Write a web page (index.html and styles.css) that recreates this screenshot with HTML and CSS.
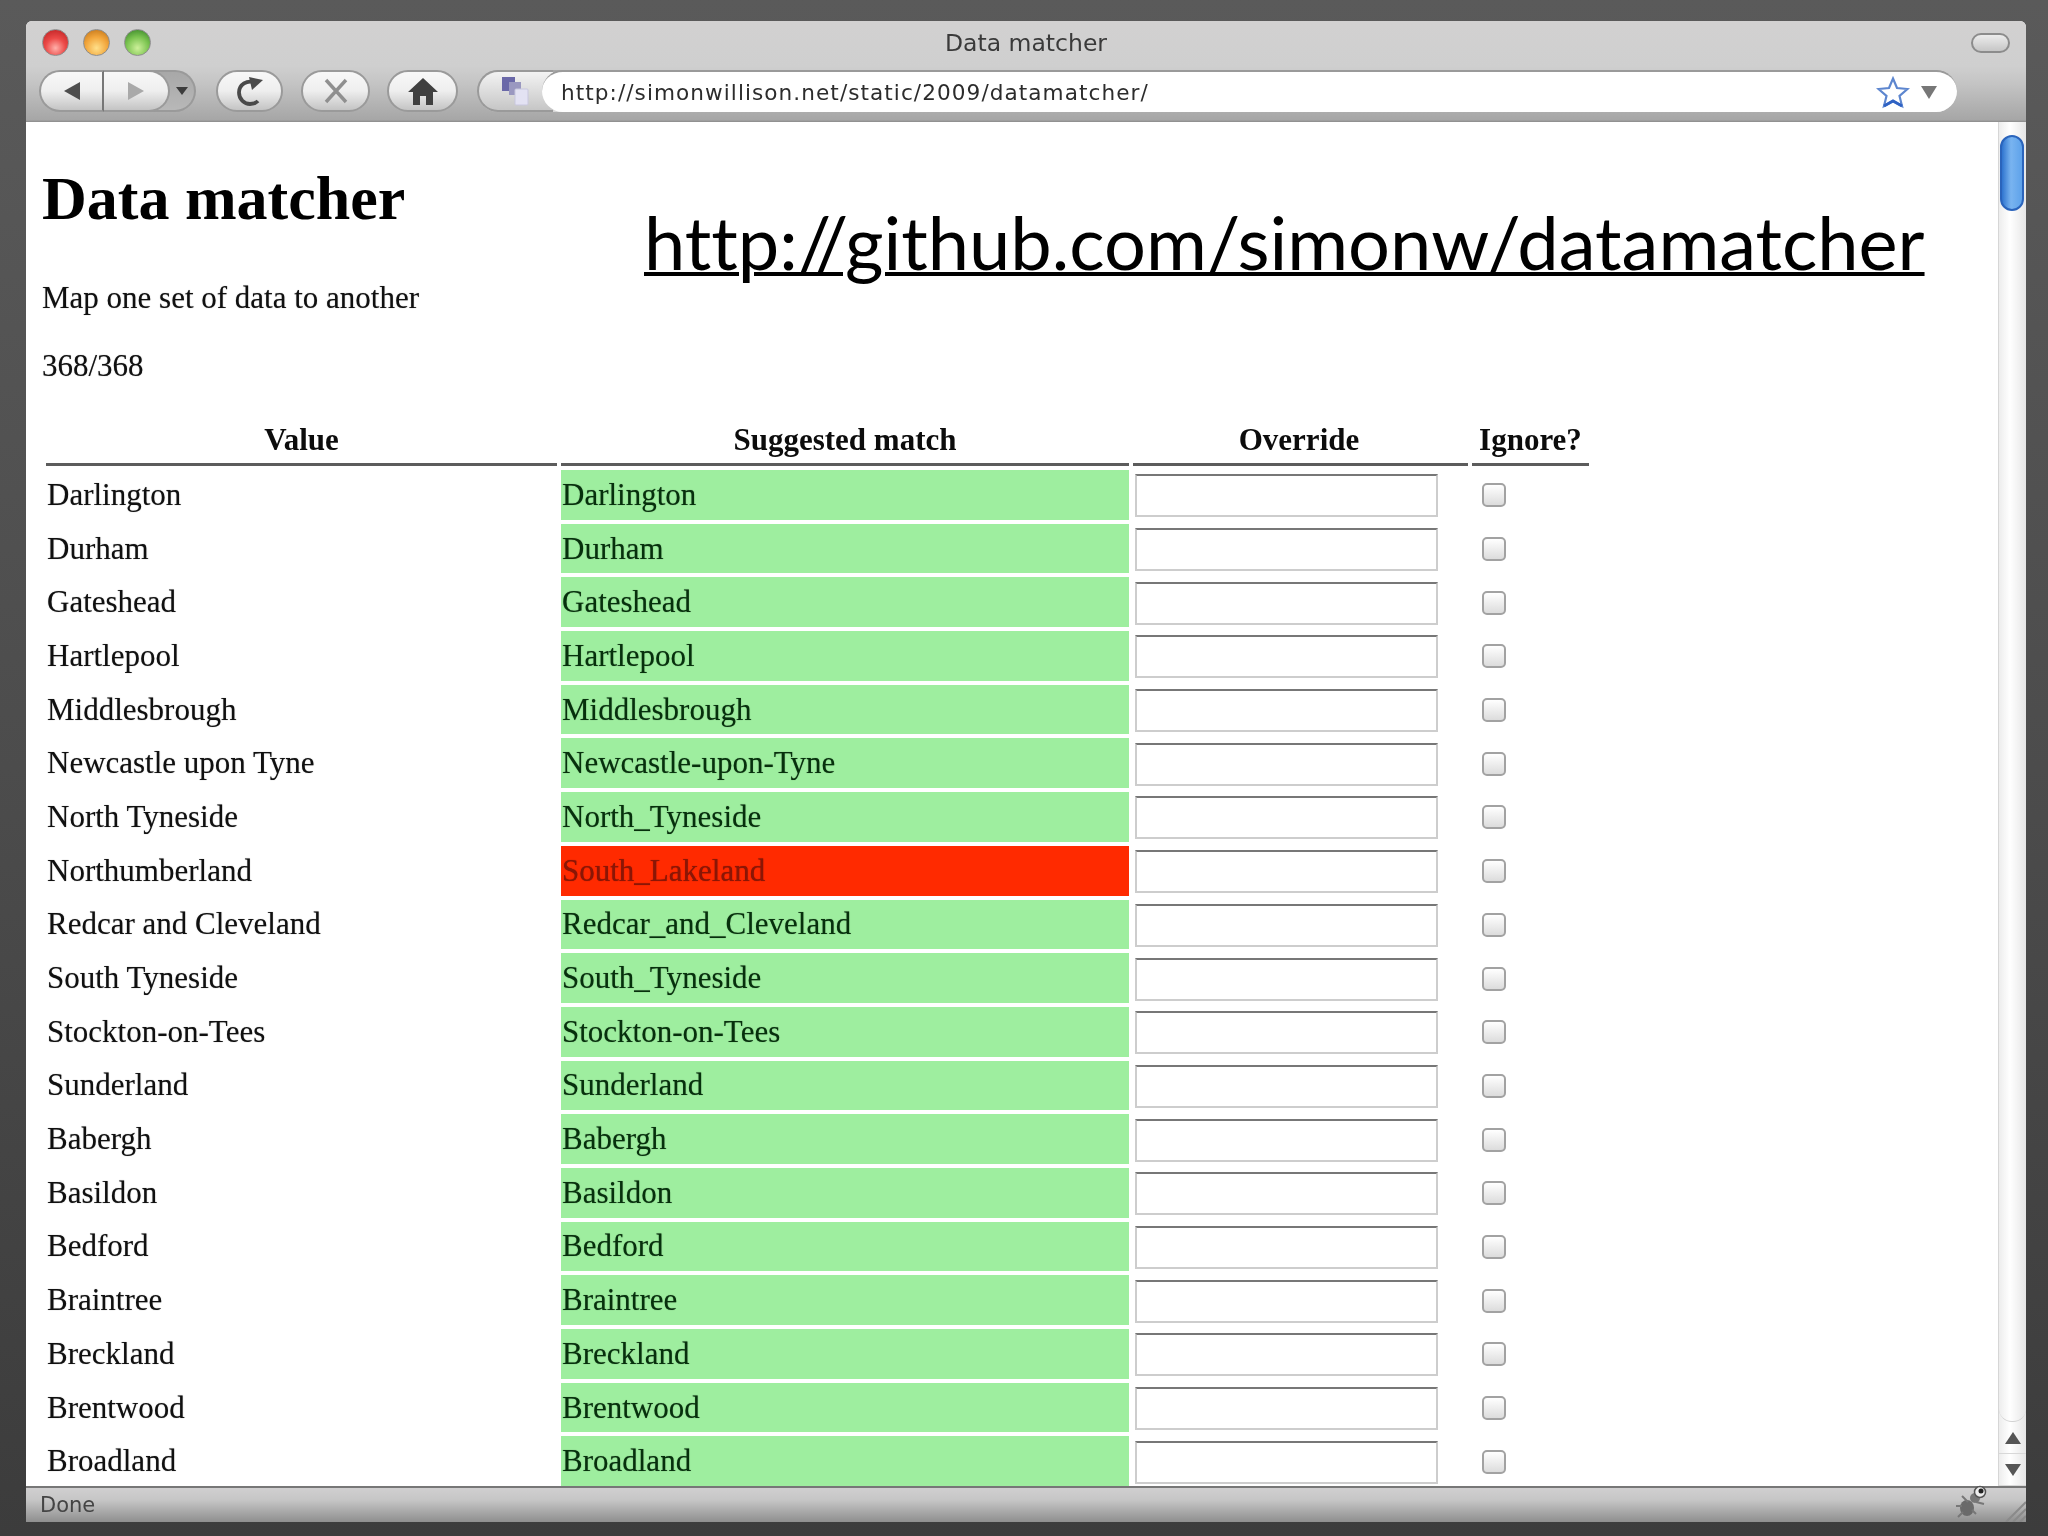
FILE: index.html
```html
<!DOCTYPE html>
<html lang="en">
<head>
<meta charset="utf-8">
<title>Data matcher</title>
<link rel="stylesheet" href="styles.css">
</head>
<body>
<div class="window">
  <header class="chrome">
    <div class="titlebar">
      <div class="lights"><span class="light red"></span><span class="light amber"></span><span class="light green"></span></div>
      <div class="title">Data matcher</div>
      <div class="oval-wrap"><span class="oval"></span></div>
    </div>
    <div class="toolbar">
      <div class="nav-group">
        <span class="seg seg-back"><svg class="ico" width="26" height="24" viewBox="0 0 26 24"><path d="M5 12 21 3v18z" fill="#4e4e4e"/></svg></span>
        <span class="seg seg-fwd"><svg class="ico" width="26" height="24" viewBox="0 0 26 24"><path d="M21 12 5 3v18z" fill="#a9a9a9"/></svg></span>
        <span class="seg seg-drop"><svg class="ico" width="14" height="10" viewBox="0 0 14 10"><path d="M1 1h12L7 9z" fill="#3c3c3c"/></svg></span>
      </div>
      <span class="btn btn-reload"><svg width="32" height="32" viewBox="0 0 32 32"><path d="M21 7.500C13 4.500 5 9.500 5 17.500 5 24.500 10.500 29 16 29c3.500 0 6-1 8-3" fill="none" stroke="#4a4a4a" stroke-width="3.800"/><path d="M15 2l3 13 11-10z" fill="#4a4a4a"/></svg></span>
      <span class="btn btn-stop"><svg width="30" height="30" viewBox="0 0 30 30"><path d="M5 4 25 26M25 4 5 26" fill="none" stroke="#8f8f8f" stroke-width="3.400"/></svg></span>
      <span class="btn btn-home"><svg width="34" height="32" viewBox="0 0 34 32"><path d="M17 3 32 17h-5v13h-7v-9h-6v9H7V17H2z" fill="#404040"/></svg></span>
      <div class="address">
        <span class="favicon"><svg width="30" height="32" viewBox="0 0 30 32"><rect x="1" y="2" width="13" height="14" fill="#6a68a8"/><rect x="8" y="7" width="12" height="13" fill="#9a98c0"/><rect x="14" y="14" width="13" height="16" rx="1" fill="#e3e2f3" stroke="#c8c7de"/></svg></span>
        <div class="field">
          <span class="url">http://simonwillison.net/static/2009/datamatcher/</span>
          <svg class="star" width="34" height="34" viewBox="0 0 34 34"><path d="M17 3.500 21 13l10.500 1-8 7 2.500 10L17 26 8 31l2.500-10-8-7L13 13z" fill="#fff" stroke="#5d86cf" stroke-width="2.200"/><path d="M8 31l9-5 9 5" fill="none" stroke="#2f62c4" stroke-width="3"/></svg>
          <svg class="caret" width="16" height="13" viewBox="0 0 16 13"><path d="M0 0h16L8 13z" fill="#777"/></svg>
        </div>
      </div>
    </div>
  </header>

  <div class="viewport">
    <main class="page">
      <a class="biglink" href="#">http://github.com/simonw/datamatcher</a>
      <h1>Data matcher</h1>
      <p class="intro">Map one set of data to another</p>
      <p class="count">368/368</p>
      <table>
        <colgroup><col class="c1"><col class="c2"><col class="c3"><col class="c4"></colgroup>
        <thead><tr><th>Value</th><th>Suggested match</th><th class="th-over">Override</th><th>Ignore?</th></tr></thead>
        <tbody>
          <tr><td>Darlington</td><td class="ok">Darlington</td><td class="in"><input type="text"></td><td class="chk"><input type="checkbox"></td></tr>
          <tr><td>Durham</td><td class="ok">Durham</td><td class="in"><input type="text"></td><td class="chk"><input type="checkbox"></td></tr>
          <tr><td>Gateshead</td><td class="ok">Gateshead</td><td class="in"><input type="text"></td><td class="chk"><input type="checkbox"></td></tr>
          <tr><td>Hartlepool</td><td class="ok">Hartlepool</td><td class="in"><input type="text"></td><td class="chk"><input type="checkbox"></td></tr>
          <tr><td>Middlesbrough</td><td class="ok">Middlesbrough</td><td class="in"><input type="text"></td><td class="chk"><input type="checkbox"></td></tr>
          <tr><td>Newcastle upon Tyne</td><td class="ok">Newcastle-upon-Tyne</td><td class="in"><input type="text"></td><td class="chk"><input type="checkbox"></td></tr>
          <tr><td>North Tyneside</td><td class="ok">North_Tyneside</td><td class="in"><input type="text"></td><td class="chk"><input type="checkbox"></td></tr>
          <tr><td>Northumberland</td><td class="bad">South_Lakeland</td><td class="in"><input type="text"></td><td class="chk"><input type="checkbox"></td></tr>
          <tr><td>Redcar and Cleveland</td><td class="ok">Redcar_and_Cleveland</td><td class="in"><input type="text"></td><td class="chk"><input type="checkbox"></td></tr>
          <tr><td>South Tyneside</td><td class="ok">South_Tyneside</td><td class="in"><input type="text"></td><td class="chk"><input type="checkbox"></td></tr>
          <tr><td>Stockton-on-Tees</td><td class="ok">Stockton-on-Tees</td><td class="in"><input type="text"></td><td class="chk"><input type="checkbox"></td></tr>
          <tr><td>Sunderland</td><td class="ok">Sunderland</td><td class="in"><input type="text"></td><td class="chk"><input type="checkbox"></td></tr>
          <tr><td>Babergh</td><td class="ok">Babergh</td><td class="in"><input type="text"></td><td class="chk"><input type="checkbox"></td></tr>
          <tr><td>Basildon</td><td class="ok">Basildon</td><td class="in"><input type="text"></td><td class="chk"><input type="checkbox"></td></tr>
          <tr><td>Bedford</td><td class="ok">Bedford</td><td class="in"><input type="text"></td><td class="chk"><input type="checkbox"></td></tr>
          <tr><td>Braintree</td><td class="ok">Braintree</td><td class="in"><input type="text"></td><td class="chk"><input type="checkbox"></td></tr>
          <tr><td>Breckland</td><td class="ok">Breckland</td><td class="in"><input type="text"></td><td class="chk"><input type="checkbox"></td></tr>
          <tr><td>Brentwood</td><td class="ok">Brentwood</td><td class="in"><input type="text"></td><td class="chk"><input type="checkbox"></td></tr>
          <tr><td>Broadland</td><td class="ok">Broadland</td><td class="in"><input type="text"></td><td class="chk"><input type="checkbox"></td></tr>
        </tbody>
      </table>
    </main>
    <aside class="scrollbar">
      <div class="track"><span class="thumb"></span></div>
      <div class="sb-btn"><svg width="18" height="14" viewBox="0 0 18 14"><path d="M9 1 17 13H1z" fill="#555"/></svg></div>
      <div class="sb-btn"><svg width="18" height="14" viewBox="0 0 18 14"><path d="M9 13 17 1H1z" fill="#555"/></svg></div>
    </aside>
  </div>

  <footer class="status">
    <span class="done">Done</span>
    <svg class="bug" width="36" height="36" viewBox="0 0 36 36"><ellipse cx="13" cy="24" rx="7" ry="8" fill="#6a6a6a"/><circle cx="21" cy="14" r="5" fill="#777"/><circle cx="26" cy="8" r="5.500" fill="#eee" stroke="#555" stroke-width="1.500"/><circle cx="27" cy="7" r="2.500" fill="#222"/><path d="M8 12l6 6M2 22h6M4 33l5-5M22 30l-4-4M30 20l-8-2" stroke="#777" stroke-width="2" fill="none"/></svg>
    <svg class="grip" width="22" height="22" viewBox="0 0 22 22"><path d="M2 22 22 2M9 22 22 9M16 22l6-6" stroke="#8a8a8a" stroke-width="2" fill="none"/></svg>
  </footer>
</div>
</body>
</html>
```
FILE: styles.css
```css
* { box-sizing: border-box; }
html, body { height: 100%; }
body {
  margin: 0;
  height: 1536px;
  overflow: hidden;
  padding: 21px 22px 14px 26px;
  background: linear-gradient(180deg, #5a5a5a 0%, #4c4c4c 50%, #3c3c3c 100%);
}
.window {
  height: 1501px;
  display: flex;
  flex-direction: column;
  border-radius: 6px 6px 0 0;
  overflow: hidden;
  background: #fff;
}

/* the page under the overlaid link is video-soft */
.chrome, h1, .intro, .count, table, .scrollbar, .status { filter: blur(0.65px); }

/* chrome */
.chrome {
  height: 101px;
  flex: none;
  display: flex;
  flex-direction: column;
  background: linear-gradient(180deg, #d2d1d1 0%, #cfcfcf 45%, #c4c4c4 62%, #a6a6a6 98%, #8a8a8a 100%);
  font-family: "DejaVu Sans", sans-serif;
}
.titlebar {
  height: 49px;
  flex: none;
  display: grid;
  grid-template-columns: 1fr auto 1fr;
  align-items: center;
  padding: 0 16px 6px 16px;
}
.lights { display: flex; gap: 14px; }
.light { width: 27px; height: 27px; border-radius: 50%; border: 1px solid #8d8d8d; }
.red { background: radial-gradient(circle at 50% 72%, #ffb0aa 0%, #ec4a48 45%, #b81c1e 100%); }
.amber { background: radial-gradient(circle at 50% 72%, #ffe08a 0%, #f2a63c 50%, #bb6d14 100%); }
.green { background: radial-gradient(circle at 50% 72%, #cdf09a 0%, #7cc451 50%, #2f7d23 100%); }
.title { font-size: 23.500px; color: #3a3a3a; }
.oval-wrap { display: flex; justify-content: flex-end; }
.oval { width: 39px; height: 20px; border: 2px solid #8c8c8c; border-radius: 10px; background: linear-gradient(180deg, #ececec, #c6c6c6); }

.toolbar {
  display: flex;
  align-items: flex-start;
  padding-left: 13px;
  padding-right: 69px;
}
.nav-group { display: flex; width: 157px; height: 42px; margin-right: 20px; }
.seg { display: flex; align-items: center; justify-content: center; height: 42px; border: 2px solid #9a9a9a; }
.seg-back { width: 65px; border-radius: 21px 0 0 21px; border-right: 2px solid #777; background: linear-gradient(180deg, #f8f8f8 0%, #eeeeee 50%, #c4c4c4 100%); }
.seg-fwd { width: 66px; border-left: 0; border-radius: 0 21px 21px 0; background: linear-gradient(180deg, #f8f8f8 0%, #eeeeee 50%, #c4c4c4 100%); position: relative; z-index: 1; }
.seg-drop { width: 46px; margin-left: -20px; padding-left: 20px; border-left: 0; border-radius: 0 21px 21px 0; background: linear-gradient(180deg, #a8a8a8, #b8b8b8); }
.btn { display: flex; align-items: center; justify-content: center; height: 42px; border: 2px solid #9a9a9a; border-radius: 21px; background: linear-gradient(180deg, #f8f8f8 0%, #eeeeee 50%, #c4c4c4 100%); }
.btn-reload { width: 67px; margin-right: 18px; }
.btn-stop { width: 69px; margin-right: 17px; }
.btn-home { width: 71px; margin-right: 19px; }
.address { flex: 1; display: flex; height: 42px; border-radius: 21px; background: linear-gradient(180deg, #a5a5a5, #d8d8d8); position: relative; }
.favicon { width: 76px; margin-right: -11px; height: 42px; display: flex; align-items: center; justify-content: center; border: 2px solid #9a9a9a; border-right: 0; border-radius: 21px 0 0 21px; background: linear-gradient(180deg, #f3f3f3, #c6c6c6); }
.field { flex: 1; display: flex; align-items: center; padding: 0 20px 0 19px; background: #fff; border-top: 2px solid #9a9a9a; border-radius: 21px; position: relative; }
.url { flex: 1; font-size: 21.600px; color: #2c2c2c; letter-spacing: 1.060px; white-space: nowrap; }
.star { margin-right: 11px; }

/* page */
.viewport { flex: 1; min-height: 0; display: flex; }
.page { flex: 1; min-width: 0; position: relative; overflow: hidden; padding-left: 16px; background: #fff; font-family: "Liberation Serif", serif; font-size: 31px; color: #101010; }
.biglink {
  position: absolute;
  z-index: 1;
  left: 618px;
  top: 72px;
  font-family: Lato, sans-serif;
  font-size: 74px;
  font-variant-ligatures: none;
  line-height: 96px;
  color: #000;
  white-space: nowrap;
  text-decoration: underline;
  text-decoration-thickness: 4px;
}
h1 { margin: 48px 0 0; font-size: 62px; line-height: 56px; font-weight: bold; color: #000; }
.intro, .count { line-height: 36px; text-shadow: 0 0 1px rgba(0, 0, 0, 0.45); }
.intro { margin: 54px 0 0; }
.count { margin: 32px 0 0; }
table { margin-top: 28px; margin-left: 0; width: 1551px; table-layout: fixed; border-collapse: separate; border-spacing: 4px; }
.c1 { width: 511px; }
.c2 { width: 568px; }
.c3 { width: 335px; }
.c4 { width: 117px; }
th { height: 50px; padding: 0; border-bottom: 3px solid #5c5c5c; font-size: 31px; font-weight: bold; color: #0c0c0c; text-align: center; }
.th-over { padding-right: 3px; }
td { height: 49.700px; padding: 0 1px; line-height: 36px; vertical-align: middle; white-space: nowrap; text-shadow: 0 0 1px rgba(0, 0, 0, 0.45); }
.ok { background: #9eee9f; color: #06300c; }
.bad { background: #ff2a00; color: #8a1606; }
.in { padding: 0 0 0 2px; }
.in input { display: block; width: 303px; height: 43px; margin: 2px 0 0; padding: 0; border: 2px solid #cdcdcd; border-top-color: #777; background: #fff; border-radius: 0; }
.chk { padding: 0 0 0 10px; }
.chk input { display: block; appearance: none; width: 24px; height: 24px; margin: 1px 0 0; border: 2px solid #a2a2a2; border-radius: 5px; background: linear-gradient(180deg, #fff, #dcdcdc); }

/* scrollbar */
.scrollbar { flex: none; width: 28px; display: flex; flex-direction: column; border-left: 1px solid #d6d6d6; background: linear-gradient(90deg, #ededed, #ffffff 40%, #e6e6e6); }
.track { flex: 1; padding: 13px 1px 0 1px; border-bottom: 1px solid #d2d2d2; border-radius: 0 0 13px 13px; }
.thumb { display: block; width: 24px; height: 76px; border-radius: 12px; border: 2px solid #2a64bc; background: linear-gradient(90deg, #2f74cf, #79b4f0 45%, #5ea2ea); }
.sb-btn { height: 32px; flex: none; display: flex; align-items: center; justify-content: center; border-bottom: 1px solid #d8d8d8; }

/* status */
.status { height: 36px; flex: none; display: flex; align-items: center; border-top: 2px solid #777; padding-left: 14px; background: linear-gradient(180deg, #d0cfd0, #c6c6c6 35%, #8f8f8f 100%); position: relative; font-family: "DejaVu Sans", sans-serif; }
.done { font-size: 21px; color: #444; }
.bug { position: absolute; right: 36px; top: -4px; }
.grip { position: absolute; right: 0; bottom: 0; }
```
